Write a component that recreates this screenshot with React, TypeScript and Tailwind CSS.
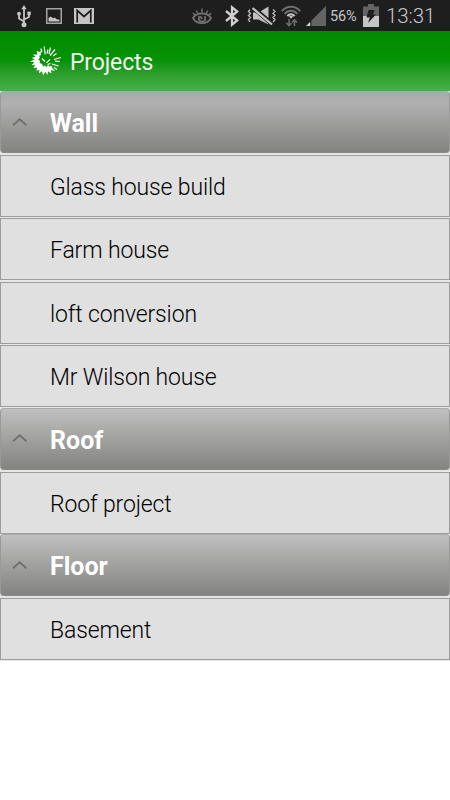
import React from "react";

type Group = { title: string; projects: string[]; first?: boolean };

const groups: Group[] = [
  { title: "Wall", projects: ["Glass house build", "Farm house", "loft conversion", "Mr Wilson house"], first: true },
  { title: "Roof", projects: ["Roof project"] },
  { title: "Floor", projects: ["Basement"] },
];

const StatusBar = () => (
  <div className="flex h-[31px] w-full items-center bg-[#1e1e1e] font-[Roboto,sans-serif] text-[#c5c5c5]">
    <svg className="ml-[16px] shrink-0" width="16" height="24" viewBox="0 0 16 24" fill="none" stroke="#c5c5c5" strokeWidth="1.8">
      <path d="M8 4v16M8 17.5L3 14.5v-3.5M8 15.5l5-2.5V9" />
      <path d="M8 1l2.7 4.3H5.3z" fill="#c5c5c5" stroke="none" />
      <circle cx="3" cy="9.7" r="1.9" fill="#c5c5c5" stroke="none" />
      <path d="M11.3 7.6h3.5v3.5h-3.5z" fill="#c5c5c5" stroke="none" />
      <circle cx="8" cy="20.7" r="2.5" fill="#c5c5c5" stroke="none" />
    </svg>
    <svg className="ml-[14px] shrink-0" width="16" height="16" viewBox="0 0 16 16">
      <path d="M.75.75h14.5v14.5H.75z" fill="none" stroke="#a5a5a5" strokeWidth="1.5" />
      <path d="M2.5 13.5v-3.5L4.5 8.5l2.7 1.7 1.5-.6 2 1.6 2.8.5v1.8z" fill="#c5c5c5" />
    </svg>
    <svg className="ml-[12px] shrink-0" width="20" height="16" viewBox="0 0 20 16">
      <path d="M0 0h20v16H0z" fill="#c5c5c5" />
      <path d="M3.2 14.5V2.5l6.8 6 6.800-6v12" fill="none" stroke="#1e1e1e" strokeWidth="1.7" />
    </svg>
    <svg className="ml-[98px] mt-px shrink-0" width="20" height="17" viewBox="0 0 20 17" fill="none" stroke="#707070" strokeWidth="1.8">
      <path d="M1 10C4.500 4 15.500 4 19 10 15.500 16.800 4.500 16.800 1 10z" />
      <path d="M7.300 8c-1.500 4 .5 5.500 2.700 5.500s4.200-1.500 2.700-5.500" strokeWidth="1.8" />
      <path d="M10 10.800L8.200 8.300" strokeWidth="2" />
      <path d="M10 .5v4M4.300 2.500l1.500 3M15.700 2.500l-1.500 3M1 5l1.800 2M19 5l-1.800 2" strokeWidth="1.500" />
    </svg>
    <svg className="ml-[13px] shrink-0" width="14" height="22" viewBox="0 0 14 22" fill="none" stroke="#d0d0d0" strokeWidth="2.3">
      <path d="M1 6l11.2 9.5L7 19.700V2.300l5.200 4.200L1 16" />
    </svg>
    <svg className="ml-[8px] shrink-0" width="30" height="20" viewBox="0 0 30 20">
      <path d="M6 6.5h5.500L21.500.5v18L11.500 13.500H6z" fill="#c0c0c0" />
      <path d="M6 1.500l20 17.500" stroke="#1e1e1e" strokeWidth="4.500" />
      <path d="M5.500 2l19.500 16.500" stroke="#c5c5c5" strokeWidth="2.200" />
      <path d="M3 3.500L1.500 5.500 3.500 7.500 1.500 9.500 3.500 11.500 1.500 13.500 3 16M26 3.500l2 2-2 2 2 2-2 2 2 2-2 2.500" fill="none" stroke="#b5b5b5" strokeWidth="1.400" />
    </svg>
    <svg className="ml-[4px] shrink-0" width="20" height="22" viewBox="0 0 20 22" fill="none" strokeWidth="2">
      <path d="M.7 6.200C5.800.3 14.200.3 19.300 6.200M3.600 8.800c3.800-4.200 9-4.200 12.800 0" stroke="#707070" />
      <path d="M6.300 11.200c2.200-2.600 5.200-2.600 7.400 0" stroke="#c5c5c5" />
      <path d="M10 13.800l-2-2.300c1.200-1 2.800-1 4 0z" fill="#c5c5c5" />
      <path d="M8 14v6M5.500 18L8 20.700l2.500-2.700M13.500 21v-6M11 17.500l2.500-2.700 2.500 2.700" stroke="#707070" strokeWidth="1.500" />
    </svg>
    <svg className="ml-[5px] shrink-0" width="20" height="20" viewBox="0 0 20 20">
      <path d="M20 0v20H5.500v-5.500z" fill="#646464" />
      <path d="M4.300 15.700V20H0z" fill="#d0d0d0" />
    </svg>
    <span className="ml-[4px] mt-[3px] w-[27px] shrink-0 text-[14.5px] leading-none tracking-[-0.2px]">56%</span>
    <svg className="ml-[6px] shrink-0" width="16" height="23" viewBox="0 0 16 23">
      <path d="M5 0h6v2.500h5V12H0V2.500h5z" fill="#646464" />
      <path d="M0 12h16v11H0z" fill="#c5c5c5" />
      <path d="M5.500 6h6l-1.500 4.500h3L5 19 6.800 13.500H3.500z" fill="#1e1e1e" />
    </svg>
    <span className="ml-[7px] mt-[2px] shrink-0 text-[20.5px] leading-none font-light tracking-[-0.1px]">13:31</span>
  </div>
);

// spiky burst used as the app logo
const Logo = () => (
  <svg className="ml-[30px] shrink-0" width="31" height="31" viewBox="0 0 31 31" fill="#fff">
    <path d="M11 4.500L10 6 6.500 5l1 3.500-4.500 0 2.500 2.200L1.500 12l3.300 1.200L0 15.500l4.300.7-2.800 3 3.600-.5-1.600 3.300 3.500-.6-.6 3.300 3-1-.4 3.600 3-2 1 4.200 2.200-3.700 2.300 3.200.4-3.700 3.700 2.200-1-3.500 4.500 1-3.500-3.400 1-1.600-3 .5-1.600-1.500-1.300 2-2.200-1.500-1.400 1.200-1-2.600-2.500-1 .6-2.200-2-1.500 1.700-1.700-.7-2 2-.6-.8-2.300 2-.9z" />
    <path d="M10.800 2.500l1.200 3M14.200 0.500l1 8M18 3.500l-1 4M20.500 1.500L19 8M25 3.500L20 9.500M26.500 7.500l-3.500 2.500M31 11.500l-7 2M25 15.200l5 .3M22 18l6.500 2M24 21.500l3 2M12 12.500l3 3M16.500 16.800l3.500-3.500M17.500 18.500l3-1" fill="none" stroke="#fff" strokeWidth="1.200" />
  </svg>
);

const GroupHeader = ({ title, first }: { title: string; first?: boolean }) => (
  <div className="h-[63.35px] bg-[#e4e4e4] pb-[1.3px]">
    <div
      className={`flex h-[62px] items-center rounded-[4px] border border-[#999] border-t-[#aaa] border-b-[#8a8a88] bg-linear-to-b ${
        first ? "from-[#a9a9a9] via-[#b0b0b0] via-20% to-[#838381]" : "from-[#c0c0c0] to-[#838381]"
      }`}
    >
      <svg className="mb-px ml-[11px] shrink-0" width="16" height="8" viewBox="0 0 16 8" fill="none" stroke="#70706e" strokeWidth="1.8">
        <path d="M1 7.200L7.700 1.300l6.700 5.900" />
      </svg>
      <h2 className="ml-[22px] mt-[3px] text-[25px] leading-none font-bold text-white">{title}</h2>
    </div>
  </div>
);

const ProjectRow = ({ name }: { name: string }) => (
  <div className="h-[63.35px] bg-[#e8e8e8] pt-[0.5px]">
    <div className="flex h-[62px] items-center border border-[#9d9d9d] bg-[#e0e0e0] pl-[49px]">
      <p className="mt-[3px] text-[23px] leading-none font-light tracking-[-0.14px] text-black">{name}</p>
    </div>
  </div>
);

const App = () => {
  return (
    <div className="h-[800px] w-[450px] overflow-hidden bg-white font-[Roboto,sans-serif]">
      <StatusBar />
      <header className="flex h-[60px] items-center bg-linear-to-b from-[#008c00] via-[#059205] via-50% to-[#49af49]">
        <Logo />
        <h1 className="ml-[9px] mt-[3px] text-[23px] leading-none tracking-[-0.15px] text-[#f3f3f3]">Projects</h1>
      </header>
      <main>
        {groups.map((group) => (
          <section key={group.title}>
            <GroupHeader title={group.title} first={group.first} />
            {group.projects.map((name) => (
              <ProjectRow key={name} name={name} />
            ))}
          </section>
        ))}
      </main>
    </div>
  );
};

export default App;
